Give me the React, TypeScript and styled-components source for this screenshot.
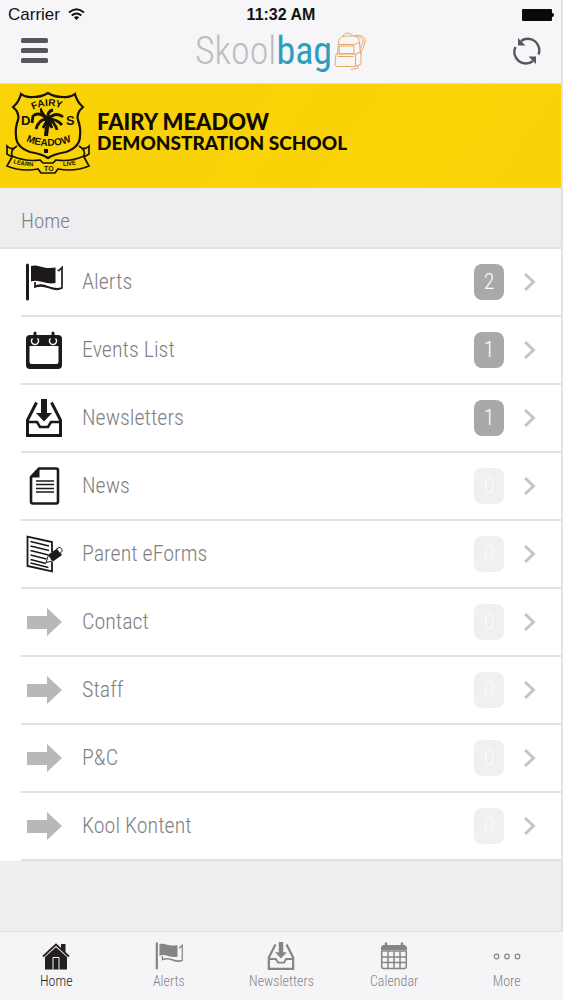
import React from "react";
import styled, { createGlobalStyle } from "styled-components";

const condensed = `"Roboto Condensed", "Liberation Sans Narrow", Roboto, sans-serif`;

const GlobalStyle = createGlobalStyle`
  *, *::before, *::after { box-sizing: border-box; }
  body { margin: 0; background: #eeedf0; font-family: ${condensed}; }
`;

const Page = styled.div`
  display: flex;
  flex-direction: column;
  min-height: 100vh;
`;

const Content = styled.div`
  flex: 1;
  display: flex;
  flex-direction: column;
  border-right: 2px solid #e3e2e5;
`;

const TopBar = styled.header`
  background: #f6f5f8;
`;

const StatusBar = styled.div`
  display: grid;
  grid-template-columns: 1fr auto 1fr;
  align-items: center;
  height: 29px;
  padding: 0 7px 0 8px;
  font: 17px/20px "Liberation Sans", sans-serif;
  color: #111;
`;

const Carrier = styled.span`
  display: flex;
  align-items: center;
  gap: 8px;
`;

const Clock = styled.time`
  font-weight: 700;
  font-size: 16px;
`;

const BatteryIcon = styled.svg`
  justify-self: end;
`;

const NavBar = styled.div`
  display: flex;
  align-items: center;
  justify-content: space-between;
  height: 54px;
  padding: 0 20px 10px;
`;

const IconButton = styled.button`
  display: flex;
  padding: 0;
  border: 0;
  background: none;
  color: #57565a;
  cursor: pointer;
`;

const Brand = styled.a`
  display: flex;
  align-items: center;
  gap: 2px;
  font: 300 38px/44px ${condensed};
  color: #bdbdc0;
  text-decoration: none;
`;

const BrandAccent = styled.span`
  font-weight: 400;
  color: #2f9dbd;
`;

const Banner = styled.section`
  display: flex;
  align-items: center;
  gap: 6px;
  height: 105px;
  padding: 0 5px 6px;
  border-top: 1px solid #f4e27c;
  background: linear-gradient(125deg, #fad407 0%, #f8d006 42%, #fad407 44%, #f9d206 60%, #fbd607 62%, #f9d207 100%);
`;

const SchoolName = styled.h1`
  margin: 0;
  padding-bottom: 2px;
  font: 900 22px/22px Lato, sans-serif;
  color: #0d0b02;
`;

const SchoolKind = styled.span`
  display: block;
  font-size: 19px;
  line-height: 20px;
`;

const SectionTitle = styled.h2`
  margin: 0;
  padding: 19px 21px 12px;
  border-bottom: 2px solid #e0dfe3;
  background: #eeedf0;
  font: 300 21px/28px ${condensed};
  color: #807f83;
`;

const Menu = styled.ul`
  margin: 0;
  padding: 0 0 0 21px;
  list-style: none;
  background: #fff;
`;

const MenuRow = styled.li`
  border-bottom: 2px solid #e0dfe2;
`;

const MenuLink = styled.a`
  display: flex;
  align-items: center;
  height: 66px;
  padding: 0 25px 0 4px;
  font: 300 22px/28px ${condensed};
  color: #807f83;
  text-decoration: none;
`;

const MenuIcon = styled.span`
  display: flex;
  color: #1d191a;
`;

const MenuLabel = styled.span`
  flex: 1;
  padding-left: 19px;
`;

const Badge = styled.span<{ $empty: boolean }>`
  display: flex;
  align-items: center;
  justify-content: center;
  width: 30px;
  height: 36px;
  margin-right: 19px;
  border-radius: 8px;
  background: ${(p) => (p.$empty ? "#f0eff1" : "#a9a8ab")};
  color: ${(p) => (p.$empty ? "#fbfbfc" : "#fff")};
`;

const TabBar = styled.nav`
  display: grid;
  grid-template-columns: repeat(5, 1fr);
  height: 69px;
  border-top: 1px solid #dddce0;
  background: #f5f4f7;
`;

const Tab = styled.a<{ $active?: boolean }>`
  display: flex;
  flex-direction: column;
  align-items: center;
  padding-top: 10px;
  gap: 2px;
  font: 300 14px/18px ${condensed};
  color: ${(p) => (p.$active ? "#231f20" : "#858487")};
  text-decoration: none;
`;

type IconProps = { size?: number };

const FlagIcon = ({ size = 38 }: IconProps) => (
  <svg width={size} height={size} viewBox="0 0 38 38" fill="none" aria-hidden="true">
    <path d="M2.500 2v34" stroke="currentColor" strokeWidth="3" strokeLinecap="round" />
    <path d="M6 3c7-2.500 11 3.500 24.500 1.500V20C20 22 14 15.500 6 18.500z" fill="currentColor" />
    <path d="M32.500 7.500h1.500l3-3v20.500c-10 5-16-6-27-1v-5M9.500 24c9-6 17 5 27 1" stroke="currentColor" strokeWidth="1.700" />
  </svg>
);

const EventsIcon = ({ size = 38 }: IconProps) => (
  <svg width={size} height={size} viewBox="0 0 38 38" fill="none" aria-hidden="true">
    <path fillRule="evenodd" d="M5 4h28a4 4 0 0 1 4 4v26a4 4 0 0 1-4 4H5a4 4 0 0 1-4-4V8a4 4 0 0 1 4-4zm-.5 11v16a2 2 0 0 0 2 2h25a2 2 0 0 0 2-2V15z" fill="currentColor" />
    <path d="M7.500 7.500a3.500 3.500 0 1 0 5 0M25.500 7.500a3.500 3.500 0 1 0 5 0" stroke="#fff" strokeWidth="1.500" />
    <path d="M10 2v7M28 2v7" stroke="currentColor" strokeWidth="3" strokeLinecap="round" />
  </svg>
);

const InboxIcon = ({ size = 38 }: IconProps) => (
  <svg width={size} height={size} viewBox="0 0 38 38" fill="none" aria-hidden="true">
    <path d="M11.500 3.500L2.500 21v15.500h33V21L26.500 3.500" stroke="currentColor" strokeWidth="3" />
    <path d="M2.500 23h9.500l3 5h8l3-5h9.500" stroke="currentColor" strokeWidth="2.600" />
    <path d="M16 0h6v14h5l-8 8.500-8-8.500h5z" fill="currentColor" />
  </svg>
);

const NewsIcon = () => (
  <svg width="38" height="38" viewBox="0 0 38 38" fill="none" aria-hidden="true">
    <path d="M14 1.500h17a2 2 0 0 1 2 2v31a2 2 0 0 1-2 2H8a2 2 0 0 1-2-2V10z" stroke="currentColor" strokeWidth="2.600" />
    <path d="M14.500 1v9.500H5.500z" fill="currentColor" />
    <path d="M11 14h18M11 17.500h18M11 21.500h18M11 25h18" stroke="currentColor" strokeWidth="1.300" />
  </svg>
);

const FormIcon = () => (
  <svg width="38" height="38" viewBox="0 0 38 38" fill="none" aria-hidden="true">
    <path d="M27 17V7L2.500 1.500v29.500L27 36.500V27" stroke="currentColor" strokeWidth="1.800" />
    <path d="M5.500 6.500l18.500 4.500M5.500 11l18.500 4.500M5.500 15.500l18 4.500M5.500 20l16 4M5.500 24.500L21 28.500M5.500 28l18 4.500" stroke="currentColor" strokeWidth="1.400" />
    <path d="M23.500 19.500l8.500-6 5 6.500-9 6.500z" fill="currentColor" />
    <path d="M23.500 20l4 6-6.500 1.500z" fill="#fff" stroke="currentColor" strokeWidth="1" />
    <path d="M31.500 14l2.500-1.500c2-.5 4 2.500 2.500 4.500L35 18.500z" fill="#fff" stroke="currentColor" strokeWidth="1" />
  </svg>
);

const ArrowIcon = () => (
  <svg width="38" height="38" viewBox="0 0 38 38" aria-hidden="true">
    <path d="M2 13h20V5l15 14-15 14v-7H2z" fill="#b8b7ba" />
  </svg>
);

const HomeIcon = () => (
  <svg width="28" height="28" viewBox="0 0 28 28" aria-hidden="true">
    <path d="M19 2h4.500v9L19 7z" fill="currentColor" />
    <path d="M1 14.500L14 2.500l13 12" fill="none" stroke="currentColor" strokeWidth="1.800" />
    <path d="M14 5.200L25 15v12.500H3V15z" fill="currentColor" />
    <path d="M11 27.500V15.500h6v12" fill="none" stroke="#f5f4f7" strokeWidth="1" />
  </svg>
);

const CalendarIcon = () => (
  <svg width="28" height="28" viewBox="0 0 28 28" fill="none" aria-hidden="true">
    <path d="M3 3h22l2 2v3H1V5z" fill="currentColor" />
    <path d="M6 1.500v5M22 1.500v5" stroke="currentColor" strokeWidth="2.500" strokeLinecap="round" />
    <path d="M1.700 9h24.600v15.500a2 2 0 0 1-2 2H3.700a2 2 0 0 1-2-2zM2 15h24M2 20.500h24M8 9v17M14 9v17M20 9v17" stroke="currentColor" strokeWidth="1.500" />
  </svg>
);

const MoreIcon = () => (
  <svg width="28" height="28" viewBox="0 0 28 28" fill="none" stroke="currentColor" strokeWidth="1.200" aria-hidden="true">
    <circle cx="3.500" cy="14.500" r="2.300" />
    <circle cx="14" cy="14.500" r="2.300" />
    <circle cx="24.500" cy="14.500" r="2.300" />
  </svg>
);

const Chevron = () => (
  <svg width="13" height="20" viewBox="0 0 13 20" fill="none" aria-hidden="true">
    <path d="M2 2l8.500 8L2 18" stroke="#c5c4c7" strokeWidth="3" />
  </svg>
);

const BackpackIcon = () => (
  <svg width="32" height="38" viewBox="0 0 32 38" fill="none" stroke="#e9a768" strokeWidth="1" aria-hidden="true">
    <path d="M3.500 22l1-12c1-5 4-6 9-6h6c4 0 6 3 6 7l1 11M9 4c0-3 8-4 9-1v1" />
    <path d="M4.500 12.500h16.500l4-2M5.500 14h14.500v7.500H5z" />
    <path d="M2 22h19.500v12.500H3c-1 0-2-1-2-2zM4 24.500h15.500M21.500 22l5.500-2v12l-5.500 2.500M24 33.500v2.500l-7 1.500" />
    <path d="M20 4c5-2 11 0 11 5 0 4-3 9-4.500 12M23 5c4-1 6 2 6 5l-3 7" />
  </svg>
);

const Crest = () => (
  <svg width="86" height="84" viewBox="0 0 86 84" fill="none" stroke="#171202" role="img" aria-label="Fairy Meadow school crest">
    <defs>
      <path id="crest-top" d="M28 19q15-8 32 0" />
      <path id="crest-mid" d="M21 50q22 10 46 0" />
      <path id="crest-left" d="M8 72q11 4 24 3" />
      <path id="crest-right" d="M58 75q11 0 22-4" />
    </defs>
    <path d="M43 2Q37 6 28 6 21 7 16 3q-2 8-8 13 7 6 5 13-3 8-2 16 0 11 14 16 12 2 18 6 6-4 18-6 14-5 14-16 1-8-2-16-2-7 5-13-6-5-8-13-5 4-12 3-9 0-15-4z" strokeWidth="2.200" />
    <path d="M12 55q-5 5-10 0v8l5 3-5 9q14 6 31 3l3 4h14l3-4q17 3 31-3l-5-9 5-3v-8q-5 5-10 0M7 65q14 6 28 4l3 3h10l3-3q15 2 28-4M7 65q-2-6 5-10M79 65q2-6-5-10" strokeWidth="1.700" />
    <path d="M44 31q-3 7-3 14M41 58v4" strokeWidth="4" />
    <path d="M42 28q-8-8-14-3l-1 7M42 28q-8 0-11 10M42 28q-8-9-5-10M43 28q8-8 15-2M43 28q9 0 14 6M43 28q7 3 9 11M43 28q-1-8 5-9M43 28l-5 9M43 28l4 9" strokeWidth="2.800" />
    <g fill="#171202" stroke="none" fontFamily="Liberation Sans, sans-serif" fontWeight="700" fontSize="10">
      <text><textPath href="#crest-top">FAIRY</textPath></text>
      <text><textPath href="#crest-mid">MEADOW</textPath></text>
      <text x="16" y="34" fontSize="13">D</text>
      <text x="61" y="34" fontSize="13">S</text>
      <text fontSize="6"><textPath href="#crest-left">LEARN</textPath></text>
      <text x="39" y="80" fontSize="7">TO</text>
      <text fontSize="6"><textPath href="#crest-right">LIVE</textPath></text>
    </g>
  </svg>
);

const menuItems = [
  { label: "Alerts", count: 2, icon: <FlagIcon /> },
  { label: "Events List", count: 1, icon: <EventsIcon /> },
  { label: "Newsletters", count: 1, icon: <InboxIcon /> },
  { label: "News", count: 0, icon: <NewsIcon /> },
  { label: "Parent eForms", count: 0, icon: <FormIcon /> },
  { label: "Contact", count: 0, icon: <ArrowIcon /> },
  { label: "Staff", count: 0, icon: <ArrowIcon /> },
  { label: "P&C", count: 0, icon: <ArrowIcon /> },
  { label: "Kool Kontent", count: 0, icon: <ArrowIcon /> },
];

const tabs = [
  { label: "Home", icon: <HomeIcon />, active: true },
  { label: "Alerts", icon: <FlagIcon size={28} /> },
  { label: "Newsletters", icon: <InboxIcon size={28} /> },
  { label: "Calendar", icon: <CalendarIcon /> },
  { label: "More", icon: <MoreIcon /> },
];

export default function App() {
  return (
    <Page>
      <GlobalStyle />
      <Content>
        <TopBar>
          <StatusBar>
            <Carrier>
              Carrier
              <svg width="17" height="13" viewBox="0 0 17 13" fill="none" stroke="#111" strokeWidth="2" aria-hidden="true">
                <path d="M1 4.500q7.500-6.500 15 0M3.700 7.500q4.800-4 9.600 0" />
                <path d="M8.500 12L5.800 9.300q2.700-2 5.400 0z" fill="#111" stroke="none" />
              </svg>
            </Carrier>
            <Clock>11:32 AM</Clock>
            <BatteryIcon width="34" height="14" viewBox="0 0 34 14" aria-hidden="true">
              <rect x="2" y="1" width="30" height="12" rx="1" fill="#0a0a0a" />
              <path d="M32 5q2 0 2 2t-2 2z" fill="#0a0a0a" />
            </BatteryIcon>
          </StatusBar>
          <NavBar>
            <IconButton type="button" aria-label="Menu">
              <svg width="28" height="26" viewBox="0 0 28 26" fill="currentColor" aria-hidden="true">
                <rect x="1" y="0" width="27" height="5" rx="1.500" />
                <rect x="1" y="10" width="27" height="5" rx="1.500" />
                <rect x="1" y="20" width="27" height="5" rx="1.500" />
              </svg>
            </IconButton>
            <Brand href="#home">
              <span>Skool<BrandAccent>bag</BrandAccent></span>
              <BackpackIcon />
            </Brand>
            <IconButton type="button" aria-label="Refresh">
              <svg width="28" height="28" viewBox="0 0 28 28" fill="none" aria-hidden="true">
                <path d="M8 4A11.500 11.500 0 0 1 25.500 17.500M20 24A11.500 11.500 0 0 1 2.500 10" stroke="currentColor" strokeWidth="2.400" />
                <path d="M5 1v7.500h7.500zM23 27v-7.500h-7.500z" fill="currentColor" />
              </svg>
            </IconButton>
          </NavBar>
        </TopBar>
        <Banner>
          <Crest />
          <SchoolName>
            FAIRY MEADOW
            <SchoolKind>DEMONSTRATION SCHOOL</SchoolKind>
          </SchoolName>
        </Banner>
        <main>
          <SectionTitle>Home</SectionTitle>
          <Menu>
            {menuItems.map((item) => (
              <MenuRow key={item.label}>
                <MenuLink href="#">
                  <MenuIcon>{item.icon}</MenuIcon>
                  <MenuLabel>{item.label}</MenuLabel>
                  <Badge $empty={item.count === 0}>{item.count}</Badge>
                  <Chevron />
                </MenuLink>
              </MenuRow>
            ))}
          </Menu>
        </main>
      </Content>
      <TabBar>
        {tabs.map((tab) => (
          <Tab key={tab.label} href="#" $active={tab.active}>
            {tab.icon}
            {tab.label}
          </Tab>
        ))}
      </TabBar>
    </Page>
  );
}
